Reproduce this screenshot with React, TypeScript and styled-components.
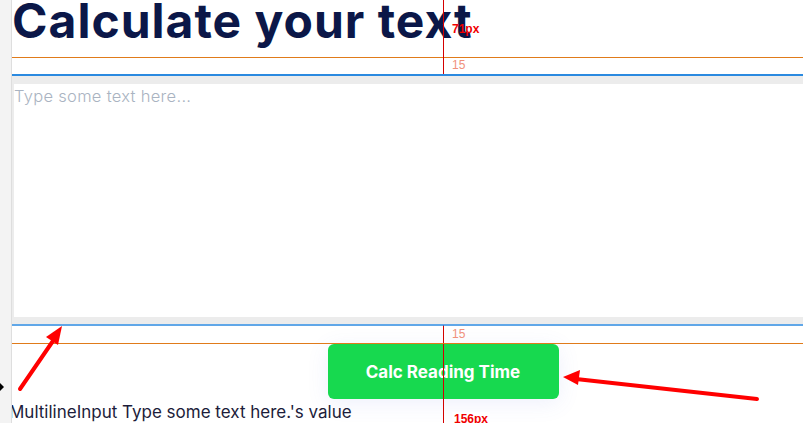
import React from "react";
import styled, { createGlobalStyle } from "styled-components";

const GlobalStyle = createGlobalStyle`
  html, body {
    margin: 0;
    padding: 0;
    background: #ffffff;
    overflow: hidden;
  }
  * { box-sizing: border-box; }
`;

const Page = styled.div`
  display: flex;
  height: 100vh;
  width: 100vw;
  overflow: hidden;
  position: relative;
  font-family: Inter, "Liberation Sans", sans-serif;
`;

const Gutter = styled.div`
  flex: 0 0 12px;
  background: #f3f3f3;
  border-right: 1px solid #dedede;
  position: relative;
  z-index: 2;
`;

const Canvas = styled.div`
  flex: 0 0 862px;
  display: flex;
  flex-direction: column;
  position: relative;
`;

const TitleBlock = styled.div`
  height: 58px;
  border-bottom: 1px solid #e07b1a;
  overflow: visible;
`;

const Heading = styled.h1`
  margin: -3px 0 0 0;
  font-size: 48px;
  line-height: 48px;
  font-weight: 700;
  letter-spacing: 1px;
  color: #0b1748;
  white-space: nowrap;
`;

const Gap = styled.div<{ $h: number; $line: string; $w: number }>`
  height: ${(p) => p.$h}px;
  border-bottom: ${(p) => p.$w}px solid ${(p) => p.$line};
`;

const InputFrame = styled.div`
  background: #ececec;
  padding: 8px 0 7px 2px;
`;

const TextArea = styled.textarea`
  display: block;
  width: 100%;
  height: 233px;
  border: none;
  outline: none;
  resize: none;
  padding: 1px 0 0 0;
  margin: 0;
  background: #ffffff;
  font-family: Inter, "Liberation Sans", sans-serif;
  font-size: 16.5px;
  line-height: 22px;
  font-weight: 300;
  letter-spacing: 0.3px;
  color: #1c1c3a;

  &::placeholder {
    color: #a9b3c1;
  }
`;

const ButtonRow = styled.div`
  display: flex;
  justify-content: center;
  padding-top: 1px;
`;

const CalcButton = styled.button`
  width: 231px;
  height: 55px;
  border: none;
  border-radius: 6px;
  background: #17d94f;
  color: #ffffff;
  font-family: Inter, "Liberation Sans", sans-serif;
  font-size: 17px;
  font-weight: 700;
  box-shadow: 0 4px 22px rgba(90, 110, 230, 0.1);
  cursor: pointer;
`;

const ValueText = styled.div`
  margin: 3px 0 0 -3px;
  font-size: 17px;
  line-height: 20px;
  color: #1c1c3a;
  white-space: nowrap;
`;

const Guide = styled.div<{ $top: number; $bottom: number }>`
  position: absolute;
  left: 431px;
  top: ${(p) => p.$top}px;
  bottom: ${(p) => p.$bottom}px;
  width: 1px;
  background: #d40000;
`;

const Measure = styled.span<{ $top: number; $tone: "red" | "orange"; $boxed?: boolean }>`
  position: absolute;
  left: 440px;
  top: ${(p) => p.$top}px;
  font-family: "Liberation Sans", Arial, sans-serif;
  font-size: 12px;
  line-height: 13px;
  font-weight: ${(p) => (p.$tone === "red" ? 700 : 400)};
  color: ${(p) => (p.$tone === "red" ? "#f00000" : "#f0907a")};
  background: ${(p) => (p.$boxed ? "#ffffff" : "transparent")};
  padding: ${(p) => (p.$boxed ? "1px 2px" : "0")};
`;

const Overlay = styled.svg`
  position: absolute;
  left: 0;
  top: 0;
  width: 803px;
  height: 423px;
  pointer-events: none;
  z-index: 3;
`;

export default function App() {
  return (
    <>
      <GlobalStyle />
      <Page>
        <Gutter />
        <Canvas>
          <TitleBlock>
            <Heading>Calculate your text</Heading>
          </TitleBlock>
          <Gap $h={18} $line="#2b8ae0" $w={2} />
          <InputFrame>
            <TextArea placeholder="Type some text here..." />
          </InputFrame>
          <Gap $h={19} $line="#2b8ae0" $w={0} />
          <ButtonRow>
            <CalcButton>Calc Reading Time</CalcButton>
          </ButtonRow>
          <ValueText>MultilineInput Type some text here.'s value</ValueText>

          <Guide $top={0} $bottom={349} />
          <Guide $top={325} $bottom={-10} />
          <Measure $top={23} $tone="red">71px</Measure>
          <Measure $top={59} $tone="orange">15</Measure>
          <Measure $top={328} $tone="orange">15</Measure>
          <Measure $top={412} $tone="red" $boxed>156px</Measure>
        </Canvas>
        <Overlay viewBox="0 0 803 423">
          <line x1="12" y1="325" x2="803" y2="325" stroke="#2b8ae0" strokeWidth="1.5" />
          <line x1="12" y1="343.5" x2="803" y2="343.5" stroke="#e07b1a" strokeWidth="1" />
          <line x1="20" y1="389" x2="55" y2="338" stroke="#ff0000" strokeWidth="4" strokeLinecap="round" />
          <polygon points="62,326 46,337 58,345" fill="#ff0000" />
          <line x1="757" y1="399" x2="576" y2="379" stroke="#ff0000" strokeWidth="4" strokeLinecap="round" />
          <polygon points="563,377 580,370 578,385" fill="#ff0000" />
          <polygon points="0,383 4,387 0,391" fill="#000000" />
        </Overlay>
      </Page>
    </>
  );
}
